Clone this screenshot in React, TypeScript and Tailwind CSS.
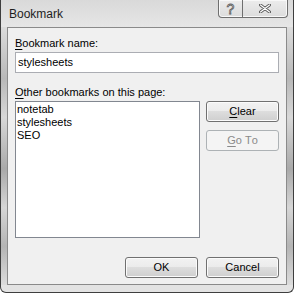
const ui = "font-['Liberation_Sans',Arial,sans-serif]";

const btn =
	"flex h-[21px] w-[73px] items-center justify-center rounded-[3px] border text-[11px] leading-none";
const btnOn =
	"border-[#707070] text-black bg-[linear-gradient(#f2f2f2_0%,#ebebeb_50%,#dddddd_50%,#cfcfcf_100%)] shadow-[inset_0_0_0_1px_#fbfbfb]";
const btnOff = "border-[#adb2b5] bg-[#f4f4f4] text-[#8a8a8a]";

function Button({
	label,
	hot,
	disabled = false,
}: {
	label: string;
	hot?: number;
	disabled?: boolean;
}) {
	return (
		<button className={`${btn} ${disabled ? btnOff : btnOn}`}>
			{label.split("").map((ch, i) =>
				i === hot ? (
					<span key={i} className="underline underline-offset-2">
						{ch}
					</span>
				) : (
					<span key={i} className="whitespace-pre">
						{ch}
					</span>
				),
			)}
		</button>
	);
}

function CaptionButtons() {
	return (
		<div className="mr-[5px] flex h-[18px] self-start overflow-hidden rounded-b-[4px] border border-t-0 border-[#6f6f6f] bg-[linear-gradient(#ececec,#dcdcdc)] shadow-[inset_0_0_0_1px_#f8f8f8]">
			<div className="flex w-[24px] items-center justify-center border-r border-[#6f6f6f] text-[14px] leading-none text-white [-webkit-text-stroke:0.8px_#5a5a5a]">
				?
			</div>
			<div className="flex w-[44px] items-center justify-center">
				<svg width="12" height="9" viewBox="0 0 12 9">
					<path
						d="M1.5 1 L10.5 8 M10.5 1 L1.5 8"
						stroke="#5a5a5a"
						strokeWidth="3"
						strokeLinecap="round"
					/>
					<path
						d="M1.5 1 L10.5 8 M10.5 1 L1.5 8"
						stroke="#ffffff"
						strokeWidth="1.2"
						strokeLinecap="round"
					/>
				</svg>
			</div>
		</div>
	);
}

function FrameSide() {
	return (
		<div className="w-[6px] bg-[linear-gradient(180deg,#dcdcdc_0%,#b8b8b8_20%,#d8d8d8_35%,#a9a9a9_55%,#d6d6d6_70%,#b4b4b4_85%,#dcdcdc_100%)]" />
	);
}

export default function App() {
	const items = ["notetab", "stylesheets", "SEO"];
	return (
		<div
			className={`${ui} flex h-[293px] w-[294px] flex-col overflow-hidden rounded-b-[6px] border border-t-0 border-[#3e3e3e] bg-[#e3e3e3] text-black`}
		>
			<div className="flex h-[27px] shrink-0 justify-between bg-[linear-gradient(#d9d9d9,#e6e6e6)]">
				<div className="pl-[8px] pt-[7px] text-[12px] leading-[15px] text-[#1e1e1e]">
					Bookmark
				</div>
				<CaptionButtons />
			</div>
			<div className="flex h-[258px] shrink-0">
				<FrameSide />
				<div className="flex flex-1 flex-col border border-[#8a8a8a] bg-[#f0f0f0] px-[7px] pt-[9px] text-[11px]">
					<div className="leading-[13px]">
						<span className="underline underline-offset-2">B</span>ookmark name:
					</div>
					<div className="mt-[2px] flex h-[21px] items-center border border-[#abadb3] bg-white pl-[2px] leading-[13px]">
						stylesheets
					</div>
					<div className="mt-[13px] leading-[13px]">
						<span className="underline underline-offset-2">O</span>ther bookmarks on
						this page:
					</div>
					<div className="mt-[2px] flex gap-[6px]">
						<div className="flex h-[137px] w-[185px] flex-col border border-[#828790] bg-white pl-[1px] pt-[1px] leading-[13px]">
							{items.map((t) => (
								<div key={t}>{t}</div>
							))}
						</div>
						<div className="flex flex-col gap-[8px]">
							<Button label="Clear" hot={0} />
							<Button label="Go To" hot={0} disabled />
						</div>
					</div>
					<div className="mt-[19px] flex justify-end gap-[8px]">
						<Button label="OK" />
						<Button label="Cancel" />
					</div>
				</div>
				<FrameSide />
			</div>
			<div className="flex-1" />
		</div>
	);
}
